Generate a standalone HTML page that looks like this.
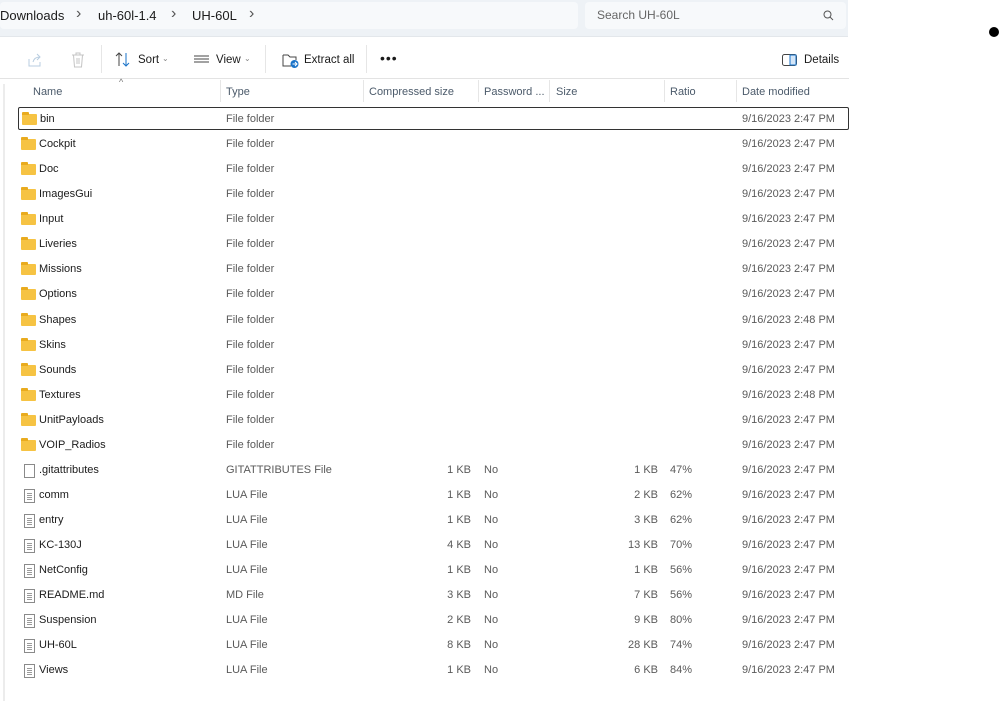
<!DOCTYPE html>
<html><head><meta charset="utf-8"><style>
*{margin:0;padding:0;box-sizing:border-box}
body{width:1000px;height:701px;background:#fff;font-family:"Liberation Sans",sans-serif;font-size:11px;color:#1b1b1b;position:relative;overflow:hidden}
.a{position:absolute;white-space:nowrap}
.top{left:0;top:0;width:848px;height:37px;background:#eef2f6;border-bottom:1px solid #e3e7eb}
.crumb{left:0;top:2px;width:578px;height:27px;background:#f7f9fb;border-radius:4px}
.search{left:585px;top:2px;width:261px;height:27px;background:#f7f9fb;border-radius:4px}
.row{position:absolute;left:15px;width:834px;height:25px;line-height:27px}
.row span{position:absolute;white-space:nowrap;color:#5a5a5a}
.row .n{left:24px;color:#1b1b1b}
.row .t{left:211px}
.row .c{right:378px}
.row .p{left:469px}
.row .s{right:191px}
.row .r{left:655px}
.row .d{left:727px}
.fold{position:absolute;left:6px;top:8px;width:15px;height:11px;background:#f6c343;border-radius:1px}
.fold:before{content:"";position:absolute;left:0;top:-2px;width:7px;height:3px;background:#e9ab1e;border-radius:1px 1px 0 0}
.file{position:absolute;left:9px;top:7px;width:11px;height:14px;border:1px solid #8a8a8a;background:#fff}
.file.l:after{content:"";position:absolute;left:2px;top:3px;width:5px;height:7px;background:repeating-linear-gradient(#9a9a9a 0 1px,transparent 1px 2px)}
.hd{top:86px;color:#4b5a6a;font-size:11px}
.sep{top:80px;width:1px;height:22px;background:#e6e6e6}
.chev{top:5px;font-size:16px;color:#555}
</style></head><body>
<div class="a top"></div>
<div class="a crumb"></div>
<div class="a search"></div>
<div class="a" style="left:0;top:8px;font-size:13px">Downloads</div>
<div class="a chev" style="left:76px">›</div>
<div class="a" style="left:98px;top:8px;font-size:13px">uh-60l-1.4</div>
<div class="a chev" style="left:171px">›</div>
<div class="a" style="left:192px;top:8px;font-size:13px">UH-60L</div>
<div class="a chev" style="left:249px">›</div>
<div class="a" style="left:597px;top:8px;font-size:12px;color:#666">Search UH-60L</div>
<svg class="a" style="left:823px;top:10px" width="11" height="11"><circle cx="4.5" cy="4.5" r="3.5" fill="none" stroke="#555"/><line x1="7" y1="7" x2="10" y2="10" stroke="#555"/></svg>
<div class="a" style="left:989px;top:27px;width:10px;height:10px;border-radius:50%;background:#000"></div>
<svg class="a" style="left:27px;top:52px" width="16" height="16"><path d="M2 7v7h11V10M6 10c1-4 4-5 7-5M10 2l3 3-3 3" fill="none" stroke="#b8cde0"/></svg>
<svg class="a" style="left:71px;top:52px" width="14" height="16"><path d="M1 3h12M5 3V1h4v2M2.5 3l1 12h7l1-12M6 6v6M8 6v6" fill="none" stroke="#c4c4c4"/></svg>
<div class="a" style="left:101px;top:45px;width:1px;height:28px;background:#e6e6e6"></div>
<svg class="a" style="left:115px;top:52px" width="16" height="15"><path d="M4 14V1M1 4l3-3 3 3" fill="none" stroke="#444"/><path d="M11 1v13M8 11l3 3 3-3" fill="none" stroke="#1a73c8"/></svg>
<div class="a" style="left:138px;top:54px;font-size:11.5px">Sort</div>
<div class="a" style="left:162px;top:54px;font-size:8px;color:#888">⌄</div>
<svg class="a" style="left:194px;top:55px" width="15" height="10"><path d="M0 1h15M0 4h15M0 7h15" stroke="#444"/></svg>
<div class="a" style="left:216px;top:54px;font-size:11.5px">View</div>
<div class="a" style="left:244px;top:54px;font-size:8px;color:#888">⌄</div>
<div class="a" style="left:265px;top:45px;width:1px;height:28px;background:#e6e6e6"></div>
<svg class="a" style="left:282px;top:52px" width="17" height="16"><path d="M1 3h5l2 2h6v3M1 3v11h8" fill="none" stroke="#444"/><circle cx="12.5" cy="12" r="4" fill="#1a73c8"/><path d="M10.5 12h4M13 10l2 2-2 2" fill="none" stroke="#fff"/></svg>
<div class="a" style="left:304px;top:54px;font-size:11.5px">Extract all</div>
<div class="a" style="left:366px;top:45px;width:1px;height:28px;background:#e6e6e6"></div>
<div class="a" style="left:380px;top:50px;font-size:14px;letter-spacing:1px">•••</div>
<svg class="a" style="left:782px;top:54px" width="15" height="12"><rect x="0.5" y="0.5" width="14" height="11" rx="2" fill="none" stroke="#444"/><rect x="8" y="1" width="6" height="10" fill="#d4e6f8" stroke="#1a73c8"/></svg>
<div class="a" style="left:804px;top:54px;font-size:11.5px">Details</div>
<div class="a" style="left:0;top:78px;width:849px;height:1px;background:#e3e3e3"></div>
<div class="a" style="left:119px;top:77px;font-size:9px;color:#777">^</div>
<div class="a hd" style="left:33px">Name</div>
<div class="a sep" style="left:220px"></div><div class="a hd" style="left:226px">Type</div>
<div class="a sep" style="left:363px"></div><div class="a hd" style="left:369px">Compressed size</div>
<div class="a sep" style="left:478px"></div><div class="a hd" style="left:484px">Password ...</div>
<div class="a sep" style="left:549px"></div><div class="a hd" style="left:556px">Size</div>
<div class="a sep" style="left:664px"></div><div class="a hd" style="left:670px">Ratio</div>
<div class="a sep" style="left:736px"></div><div class="a hd" style="left:742px">Date modified</div>
<div class="a" style="left:3px;top:84px;width:2px;height:617px;background:#ececec"></div>
<div class="row" style="top:107px;border:1px solid #333;border-radius:2px;left:18px;width:831px;height:23px;line-height:23px"><div class="fold" style="left:3px;top:6px"></div><span class="n" style="left:21px">bin</span><span class="t" style="left:207px">File folder</span><span class="d" style="left:723px">9/16/2023 2:47 PM</span></div>
<div class="row" style="top:131px"><div class="fold"></div><span class="n">Cockpit</span><span class="t">File folder</span><span class="d">9/16/2023 2:47 PM</span></div>
<div class="row" style="top:156px"><div class="fold"></div><span class="n">Doc</span><span class="t">File folder</span><span class="d">9/16/2023 2:47 PM</span></div>
<div class="row" style="top:181px"><div class="fold"></div><span class="n">ImagesGui</span><span class="t">File folder</span><span class="d">9/16/2023 2:47 PM</span></div>
<div class="row" style="top:206px"><div class="fold"></div><span class="n">Input</span><span class="t">File folder</span><span class="d">9/16/2023 2:47 PM</span></div>
<div class="row" style="top:231px"><div class="fold"></div><span class="n">Liveries</span><span class="t">File folder</span><span class="d">9/16/2023 2:47 PM</span></div>
<div class="row" style="top:256px"><div class="fold"></div><span class="n">Missions</span><span class="t">File folder</span><span class="d">9/16/2023 2:47 PM</span></div>
<div class="row" style="top:281px"><div class="fold"></div><span class="n">Options</span><span class="t">File folder</span><span class="d">9/16/2023 2:47 PM</span></div>
<div class="row" style="top:307px"><div class="fold"></div><span class="n">Shapes</span><span class="t">File folder</span><span class="d">9/16/2023 2:48 PM</span></div>
<div class="row" style="top:332px"><div class="fold"></div><span class="n">Skins</span><span class="t">File folder</span><span class="d">9/16/2023 2:47 PM</span></div>
<div class="row" style="top:357px"><div class="fold"></div><span class="n">Sounds</span><span class="t">File folder</span><span class="d">9/16/2023 2:47 PM</span></div>
<div class="row" style="top:382px"><div class="fold"></div><span class="n">Textures</span><span class="t">File folder</span><span class="d">9/16/2023 2:48 PM</span></div>
<div class="row" style="top:407px"><div class="fold"></div><span class="n">UnitPayloads</span><span class="t">File folder</span><span class="d">9/16/2023 2:47 PM</span></div>
<div class="row" style="top:432px"><div class="fold"></div><span class="n">VOIP_Radios</span><span class="t">File folder</span><span class="d">9/16/2023 2:47 PM</span></div>
<div class="row" style="top:457px"><div class="file"></div><span class="n">.gitattributes</span><span class="t">GITATTRIBUTES File</span><span class="c">1 KB</span><span class="p">No</span><span class="s">1 KB</span><span class="r">47%</span><span class="d">9/16/2023 2:47 PM</span></div>
<div class="row" style="top:482px"><div class="file l"></div><span class="n">comm</span><span class="t">LUA File</span><span class="c">1 KB</span><span class="p">No</span><span class="s">2 KB</span><span class="r">62%</span><span class="d">9/16/2023 2:47 PM</span></div>
<div class="row" style="top:507px"><div class="file l"></div><span class="n">entry</span><span class="t">LUA File</span><span class="c">1 KB</span><span class="p">No</span><span class="s">3 KB</span><span class="r">62%</span><span class="d">9/16/2023 2:47 PM</span></div>
<div class="row" style="top:532px"><div class="file l"></div><span class="n">KC-130J</span><span class="t">LUA File</span><span class="c">4 KB</span><span class="p">No</span><span class="s">13 KB</span><span class="r">70%</span><span class="d">9/16/2023 2:47 PM</span></div>
<div class="row" style="top:557px"><div class="file l"></div><span class="n">NetConfig</span><span class="t">LUA File</span><span class="c">1 KB</span><span class="p">No</span><span class="s">1 KB</span><span class="r">56%</span><span class="d">9/16/2023 2:47 PM</span></div>
<div class="row" style="top:582px"><div class="file l"></div><span class="n">README.md</span><span class="t">MD File</span><span class="c">3 KB</span><span class="p">No</span><span class="s">7 KB</span><span class="r">56%</span><span class="d">9/16/2023 2:47 PM</span></div>
<div class="row" style="top:607px"><div class="file l"></div><span class="n">Suspension</span><span class="t">LUA File</span><span class="c">2 KB</span><span class="p">No</span><span class="s">9 KB</span><span class="r">80%</span><span class="d">9/16/2023 2:47 PM</span></div>
<div class="row" style="top:632px"><div class="file l"></div><span class="n">UH-60L</span><span class="t">LUA File</span><span class="c">8 KB</span><span class="p">No</span><span class="s">28 KB</span><span class="r">74%</span><span class="d">9/16/2023 2:47 PM</span></div>
<div class="row" style="top:657px"><div class="file l"></div><span class="n">Views</span><span class="t">LUA File</span><span class="c">1 KB</span><span class="p">No</span><span class="s">6 KB</span><span class="r">84%</span><span class="d">9/16/2023 2:47 PM</span></div>
</body></html>
